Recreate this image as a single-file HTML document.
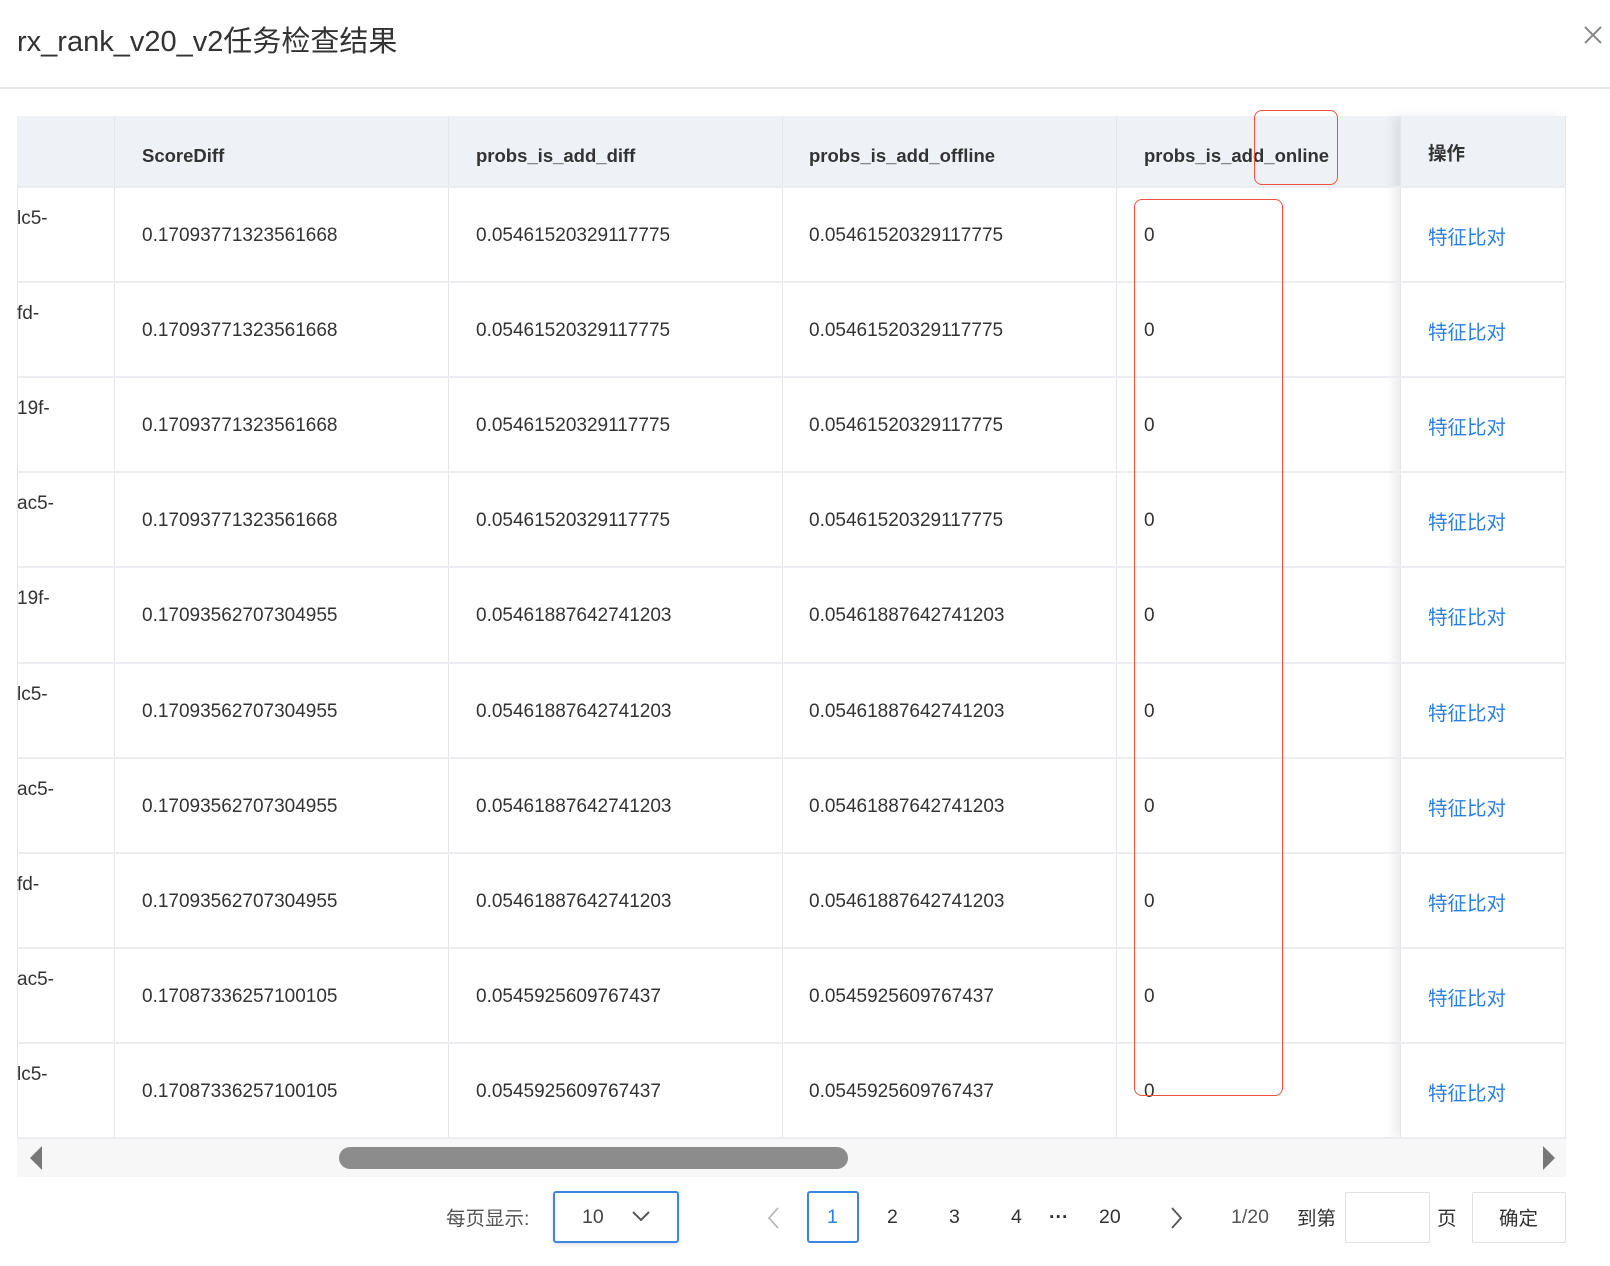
<!DOCTYPE html>
<html><head><meta charset="utf-8"><style>
*{margin:0;padding:0;box-sizing:border-box}
body{width:1610px;height:1266px;background:#fff;font-family:"Liberation Sans","Noto Sans CJK SC",sans-serif;color:#333;position:relative;overflow:hidden}
.a{position:absolute;white-space:nowrap}
.title{left:17px;top:18px;font-size:29px;color:#333}
.close{left:1582px;top:24px;width:22px;height:22px}
.hd{left:0;top:87px;width:1610px;height:2px;background:#e8e8e8}
.tbl{left:17px;top:116px;width:1549px;height:1022px;border:1px solid #e4e6ea;border-right:none;border-top:none}
.head{left:17px;top:116px;width:1549px;height:71px;background:#eef1f6}
.vl{width:1px;background:#e4e6ea;top:116px;height:1022px}
.hl{height:2px;background:#ebedf0;left:17px;width:1549px}
.ht{font-size:18.5px;font-weight:bold;color:#333;top:145px}
.dt{font-size:19px;color:#333}
.lk{font-size:19.5px;color:#2b7fe0}
.fix{left:1400px;top:116px;width:166px;height:1022px;box-shadow:-6px 0 10px rgba(0,0,0,0.08);border-right:1px solid #e4e6ea}
.red{border:1.5px solid #f0503c;border-radius:8px}
.pg{font-size:19.5px;top:1206px;color:#333}
.cj{top:1202px}
.box{border:1px solid #e0e0e0;border-radius:2px}
</style></head><body>
<div class="a title">rx_rank_v20_v2任务检查结果</div>
<svg class="a close" viewBox="0 0 22 22"><path d="M3 3L19 19M19 3L3 19" stroke="#888" stroke-width="2"/></svg>
<div class="a hd"></div>

<div class="a tbl"></div>
<div class="a head"></div>
<div class="a fix" style="background:transparent"></div>
<div class="a" style="left:1400px;top:116px;width:166px;height:71px;background:#eef1f6"></div>
<div class="a vl" style="left:114px"></div>
<div class="a vl" style="left:448px"></div>
<div class="a vl" style="left:782px"></div>
<div class="a vl" style="left:1116px"></div>
<div class="a vl" style="left:1400px"></div>
<div class="a vl" style="left:1565px"></div>
<div class="a hl" style="top:186px"></div>

<div class="a ht" style="left:142px">ScoreDiff</div>
<div class="a ht" style="left:476px">probs_is_add_diff</div>
<div class="a ht" style="left:809px">probs_is_add_offline</div>
<div class="a ht" style="left:1144px">probs_is_add_online</div>
<div class="a ht" style="left:1428px;top:140px">操作</div>

<div id="rows"></div>
<script>
var d=[["lc5-","0.17093771323561668","0.05461520329117775"],["fd-","0.17093771323561668","0.05461520329117775"],["19f-","0.17093771323561668","0.05461520329117775"],["ac5-","0.17093771323561668","0.05461520329117775"],["19f-","0.17093562707304955","0.05461887642741203"],["lc5-","0.17093562707304955","0.05461887642741203"],["ac5-","0.17093562707304955","0.05461887642741203"],["fd-","0.17093562707304955","0.05461887642741203"],["ac5-","0.17087336257100105","0.0545925609767437"],["lc5-","0.17087336257100105","0.0545925609767437"]];
var h="";
for(var i=0;i<10;i++){var t=187+95.1*i;
if(i>0)h+='<div class="a hl" style="top:'+(t-1)+'px"></div>';
h+='<div class="a dt" style="left:17px;top:'+(t+21)+'px">'+d[i][0]+'</div>';
var y=t+38;
h+='<div class="a dt" style="left:142px;top:'+y+'px">'+d[i][1]+'</div>';
h+='<div class="a dt" style="left:476px;top:'+y+'px">'+d[i][2]+'</div>';
h+='<div class="a dt" style="left:809px;top:'+y+'px">'+d[i][2]+'</div>';
h+='<div class="a dt" style="left:1144px;top:'+y+'px">0</div>';
h+='<div class="a lk" style="left:1428px;top:'+(y-4)+'px">特征比对</div>';}
document.getElementById("rows").innerHTML=h;
</script>
<div class="a hl" style="top:1137px"></div>

<div class="a red" style="left:1254px;top:110px;width:84px;height:75px"></div>
<div class="a red" style="left:1134px;top:199px;width:149px;height:897px"></div>

<div class="a" style="left:17px;top:1139px;width:1549px;height:38px;background:#f7f7f7"></div>
<svg class="a" style="left:28px;top:1145px" width="16" height="26"><path d="M14 1L2 13L14 25Z" fill="#777"/></svg>
<svg class="a" style="left:1541px;top:1145px" width="16" height="26"><path d="M2 1L14 13L2 25Z" fill="#777"/></svg>
<div class="a" style="left:339px;top:1147px;width:509px;height:22px;background:#8c8c8c;border-radius:11px"></div>

<div class="a pg cj" style="left:446px;color:#555">每页显示:</div>
<div class="a" style="left:553px;top:1191px;width:126px;height:52px;border:2px solid #3a86e0;border-radius:3px;box-shadow:0 2px 4px rgba(0,0,0,0.12)"></div>
<div class="a pg" style="left:582px;color:#444">10</div>
<svg class="a" style="left:631px;top:1209px" width="20" height="14"><path d="M2 3L10 11L18 3" stroke="#555" stroke-width="2" fill="none"/></svg>
<svg class="a" style="left:766px;top:1206px" width="14" height="24"><path d="M12 2L3 12L12 22" stroke="#bbb" stroke-width="1.8" fill="none"/></svg>
<div class="a" style="left:807px;top:1191px;width:52px;height:52px;border:2px solid #3a86e0;border-radius:3px"></div>
<div class="a pg" style="left:827px;color:#2b7fe0">1</div>
<div class="a pg" style="left:887px">2</div>
<div class="a pg" style="left:949px">3</div>
<div class="a pg" style="left:1011px">4</div>
<div class="a pg" style="left:1049px;font-weight:bold;top:1206px">···</div>
<div class="a pg" style="left:1099px">20</div>
<svg class="a" style="left:1170px;top:1206px" width="14" height="24"><path d="M2 2L11 12L2 22" stroke="#555" stroke-width="1.8" fill="none"/></svg>
<div class="a pg" style="left:1231px;color:#555">1/20</div>
<div class="a pg cj" style="left:1297px">到第</div>
<div class="a box" style="left:1345px;top:1192px;width:85px;height:51px"></div>
<div class="a pg cj" style="left:1437px">页</div>
<div class="a box" style="left:1472px;top:1192px;width:94px;height:51px"></div>
<div class="a pg cj" style="left:1499px">确定</div>
</body></html>
